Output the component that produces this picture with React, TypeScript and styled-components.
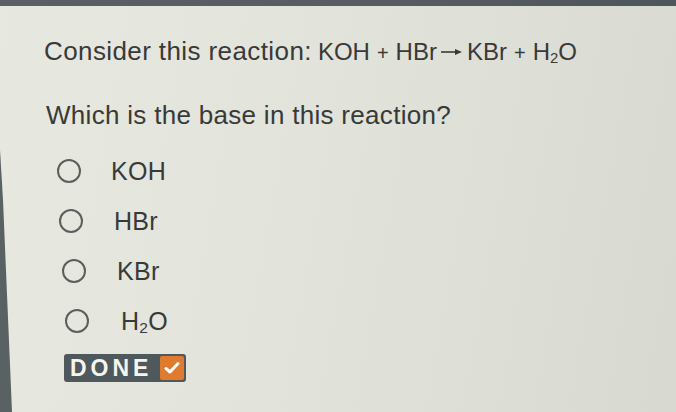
import React from "react";
import styled, { createGlobalStyle } from "styled-components";

const Global = createGlobalStyle`
  html, body { margin: 0; padding: 0; }
  body {
    width: 676px;
    height: 412px;
    overflow: hidden;
    font-family: "Liberation Sans", Arial, sans-serif;
  }
`;

const Screen = styled.div`
  position: relative;
  width: 676px;
  height: 412px;
  overflow: hidden;
  background: linear-gradient(100deg, #e7e8df 0%, #e2e3da 45%, #d8d9d0 100%);
  display: flex;
  flex-direction: column;
`;

const TopBar = styled.div`
  height: 6px;
  flex: none;
  background: linear-gradient(90deg, #5b6064 0%, #565c61 60%, #4e555b 100%);
`;

const EdgeShadow = styled.div`
  position: absolute;
  left: 0;
  top: 0;
  width: 16px;
  height: 412px;
  background: #5a6163;
  clip-path: polygon(0 150px, 3px 200px, 12px 412px, 0 412px);
`;

const Content = styled.div`
  padding: 30px 0 0 44px;
  color: #383a39;
  display: flex;
  flex-direction: column;
`;

const Prompt = styled.div`
  font-size: 26px;
  line-height: 30px;
  letter-spacing: 0.4px;
  white-space: nowrap;
`;

const Equation = styled.span`
  margin-left: 6px;
  font-size: 24px;
  letter-spacing: 0;
`;

const Op = styled.span`
  margin: 0 7px;
  font-size: 20px;
`;

const Arrow = styled.svg`
  width: 22px;
  height: 10px;
  margin: 0 4px;
  vertical-align: 3px;
`;

const Sub = styled.sub`
  font-size: 0.62em;
  line-height: 0;
  vertical-align: -0.2em;
`;

const Question = styled.div`
  font-size: 26px;
  line-height: 30px;
  letter-spacing: 0.3px;
  margin-top: 32px;
  margin-left: 2px;
`;

const Options = styled.div`
  display: flex;
  flex-direction: column;
  gap: 24px;
  margin-top: 28px;
`;

const Option = styled.label<{ $indent: number }>`
  display: flex;
  align-items: center;
  height: 26px;
  padding-left: ${(p) => p.$indent}px;
  font-size: 25px;
`;

const Radio = styled.span`
  width: 20px;
  height: 20px;
  border-radius: 50%;
  border: 2.5px solid #5c5e5d;
  flex: none;
`;

const OptionText = styled.span<{ $gap: number }>`
  margin-left: ${(p) => p.$gap}px;
  letter-spacing: 0.3px;
  line-height: 26px;
`;

const Done = styled.div`
  margin-top: 20px;
  margin-left: 20px;
  width: 122px;
  height: 28px;
  border-radius: 3px;
  background: #4f585c;
  display: flex;
  align-items: stretch;
  overflow: hidden;
`;

const DoneLabel = styled.span`
  flex: 1;
  color: #f5f5f0;
  font-weight: 700;
  font-size: 23px;
  letter-spacing: 4px;
  display: flex;
  align-items: center;
  padding-left: 6px;
`;

const Check = styled.span`
  width: 24px;
  margin: 2px 2px 2px 0;
  border-radius: 2px;
  background: #e07a2e;
  display: flex;
  align-items: center;
  justify-content: center;
`;

const options: { label: React.ReactNode; indent: number; gap: number }[] = [
  { label: "KOH", indent: 13, gap: 30 },
  { label: "HBr", indent: 15, gap: 31 },
  { label: "KBr", indent: 18, gap: 31 },
  { label: (<>H<Sub>2</Sub>O</>), indent: 21, gap: 32 },
];

export default function App() {
  return (
    <>
      <Global />
      <Screen>
        <TopBar />
        <EdgeShadow />
        <Content>
          <Prompt>
            Consider this reaction:
            <Equation>
              KOH<Op>+</Op>HBr
              <Arrow viewBox="0 0 22 10">
                <line x1="0" y1="5" x2="17" y2="5" stroke="#383a39" strokeWidth="1.6" />
                <path d="M14 2 L21 5 L14 8 Z" fill="#383a39" />
              </Arrow>
              KBr<Op>+</Op>H<Sub>2</Sub>O
            </Equation>
          </Prompt>
          <Question>Which is the base in this reaction?</Question>
          <Options>
            {options.map((o, i) => (
              <Option key={i} $indent={o.indent}>
                <Radio />
                <OptionText $gap={o.gap}>{o.label}</OptionText>
              </Option>
            ))}
          </Options>
          <Done>
            <DoneLabel>DONE</DoneLabel>
            <Check>
              <svg width="16" height="14" viewBox="0 0 16 14">
                <path d="M2 7.5 L6 11 L14 2.5" fill="none" stroke="#fff" strokeWidth="3" strokeLinecap="round" strokeLinejoin="round" />
              </svg>
            </Check>
          </Done>
        </Content>
      </Screen>
    </>
  );
}
